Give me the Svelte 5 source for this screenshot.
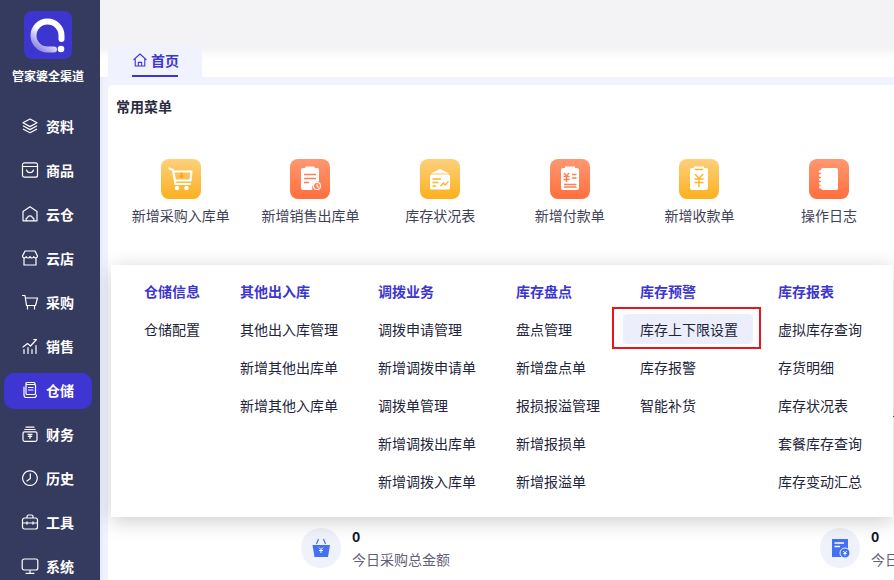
<script lang="ts">
	const navItems = [
		{ label: '资料', d: 'M9 2 16 5.8 9 9.6 2 5.8ZM2.4 9 9 12.6 15.6 9M2.4 12.2 9 15.8 15.6 12.2' },
		{ label: '商品', d: 'M3.5 1.8H14.5A2 2 0 0 1 16.500 3.800V14.200A2 2 0 0 1 14.500 16.200H3.500A2 2 0 0 1 1.500 14.200V3.800A2 2 0 0 1 3.500 1.800ZM1.500 5.500H16.500M5.500 9C6.500 12.500 11.500 12.500 12.500 9' },
		{ label: '云仓', d: 'M2 15.800V6.500L9 1.800 16 6.500V15.800H2M6.500 15.800C4.500 15.800 4.500 12.800 6.500 12.800 7 10.200 11 10.200 11.500 12.800 13.500 12.800 13.500 15.800 11.500 15.800' },
		{ label: '云店', d: 'M4 2H14L16.500 7C16.500 9.500 13 9.500 12.800 7.500 12.500 9.500 9.500 9.500 9 7.500 8.500 9.500 5.500 9.500 5.200 7.500 5 9.500 1.500 9.500 1.500 7ZM3 9.500V16H15V9.500' },
		{ label: '采购', d: 'M1.500 2.500H4L5.500 12.500H14.500L16.500 5H4.500M6.500 12.500V16M13.500 12.500V16' },
		{ label: '销售', d: 'M2 10 6.500 6.500 9.500 9 15.500 2.500M15.500 2.500H12.800M3 12.500V16.500M7 10.500V16.500M11 12.500V16.500M15 8.500V16.500' },
		{ label: '仓储', d: 'M5 3.500V2.500A1 1 0 0 1 6 1.500H13A1 1 0 0 1 14 2.500V3.500M3 6V14A2.500 2.500 0 0 0 5.500 16.500H13A2.500 2.500 0 0 0 15.500 14M5 3.500H13.500A1 1 0 0 1 14.500 4.500V12.500A1 1 0 0 1 13.500 13.500H6A1 1 0 0 1 5 12.500ZM7.500 6.500H12M7.500 9H12' },
		{ label: '财务', d: 'M5 2.200H13M3.800 4.500H14.200M3.500 6.800H14.500A1.500 1.500 0 0 1 16 8.300V14.800A1.500 1.500 0 0 1 14.500 16.300H3.500A1.500 1.500 0 0 1 2 14.800V8.300A1.500 1.500 0 0 1 3.500 6.800ZM7 9.300H11M9 9.300V13.500M7.300 11.300H10.700' },
		{ label: '历史', d: 'M9 1.800A7.300 7.300 0 1 1 8.900 1.800M9.300 4.800V9.500L6 12' },
		{ label: '工具', d: 'M6 5V3.500A1.500 1.500 0 0 1 7.500 2H10.500A1.500 1.500 0 0 1 12 3.500V5M3.500 5H14.500A2 2 0 0 1 16.500 7V14A2 2 0 0 1 14.500 16H3.500A2 2 0 0 1 1.500 14V7A2 2 0 0 1 3.500 5ZM1.500 10H16.500M6 8.800V11.200M12 8.800V11.200' },
		{ label: '系统', d: 'M3.200 2H14.800A2 2 0 0 1 16.800 4V11A2 2 0 0 1 14.800 13H3.200A2 2 0 0 1 1.200 11V4A2 2 0 0 1 3.200 2ZM9 13V16.300M5 16.300H13' }
	];

	const quickItems = [
		{ label: '新增采购入库单', tone: 'gold', glyph: 'cart' },
		{ label: '新增销售出库单', tone: 'coral', glyph: 'clip' },
		{ label: '库存状况表', tone: 'gold', glyph: 'mail' },
		{ label: '新增付款单', tone: 'coral', glyph: 'pay' },
		{ label: '新增收款单', tone: 'gold', glyph: 'receive' },
		{ label: '操作日志', tone: 'coral', glyph: 'book' }
	];

	const menuColumns = [
		{ title: '仓储信息', items: ['仓储配置'] },
		{ title: '其他出入库', items: ['其他出入库管理', '新增其他出库单', '新增其他入库单'] },
		{ title: '调拨业务', items: ['调拨申请管理', '新增调拨申请单', '调拨单管理', '新增调拨出库单', '新增调拨入库单'] },
		{ title: '库存盘点', items: ['盘点管理', '新增盘点单', '报损报溢管理', '新增报损单', '新增报溢单'] },
		{ title: '库存预警', items: ['库存上下限设置', '库存报警', '智能补货'] },
		{ title: '库存报表', items: ['虚拟库存查询', '存货明细', '库存状况表', '套餐库存查询', '库存变动汇总'] }
	];

	const activeNav = '仓储';
	const activeMenu = '库存上下限设置';
</script>

{#snippet glyph(name: string)}
	{#if name === 'cart'}
		<path class="line" d="M8.500 9.500 12 11 14.500 25H29M12.500 12.500H30.500L29.500 21.500H14" />
		<circle class="solid" cx="16" cy="29" r="2.200" />
		<circle class="solid" cx="25.500" cy="29" r="2.200" />
		<path class="ink-fill" d="M19.500 13.500H21.500V16.500H23.500L20.500 19.500 17.500 16.500H19.500Z" />
	{:else if name === 'clip'}
		<path class="solid" d="M13 9H15L16 7.500H24L25 9H27A2 2 0 0 1 29 11V22.500A6.500 6.500 0 0 0 22.500 31H13A2 2 0 0 1 11 29V11A2 2 0 0 1 13 9Z" />
		<path class="ink" d="M14 15.500H26M14 19.500H26M14 23.500H19" />
		<circle class="line thin" cx="27" cy="27" r="3.500" />
		<path class="line thin" d="M27 25.500V27L28.200 28" />
	{:else if name === 'mail'}
		<path class="solid" d="M10.500 14.500 20 10 29.500 14.500Z" />
		<rect class="solid" x="10" y="15.500" width="20" height="15" rx="1.500" />
		<path class="ink" d="M12.500 20H21M12.500 23.500H18.500M12.500 27H16M20.500 27 23.500 24 25 26 28.500 22.500" />
	{:else if name === 'pay'}
		<path class="solid" d="M13 9H15V7.500H25V9H27A2 2 0 0 1 29 11V29A2 2 0 0 1 27 31H13A2 2 0 0 1 11 29V11A2 2 0 0 1 13 9Z" />
		<path class="ink" d="M14 14 16.500 17 19 14M13.500 17.500H19.500M13.500 20.500H19.500M16.500 17V23M22 15.500H26.500M22 19H26.500M14 25.500H26.500M14 28H26.500" />
	{:else if name === 'receive'}
		<path class="solid" d="M13 9H15V7.500H25V9H27A2 2 0 0 1 29 11V29A2 2 0 0 1 27 31H13A2 2 0 0 1 11 29V11A2 2 0 0 1 13 9Z" />
		<path class="ink" d="M16 10.500H24M16 15 20 19.500 24 15M15.500 20H24.500M15.500 23.500H24.500M20 19.500V28" />
	{:else}
		<rect class="solid" x="12" y="9" width="17" height="22" rx="2" />
		<path class="line thin" d="M11 12.500H13.500M11 16.500H13.500M11 20.500H13.500M11 24.500H13.500M11 28H13.500" />
		<circle class="solid" cx="11.500" cy="12.500" r="1.500" />
		<circle class="solid" cx="11.500" cy="16.500" r="1.500" />
		<circle class="solid" cx="11.500" cy="20.500" r="1.500" />
		<circle class="solid" cx="11.500" cy="24.500" r="1.500" />
		<circle class="solid" cx="11.500" cy="28" r="1.500" />
	{/if}
{/snippet}

<div class="app">
	<aside class="sidebar">
		<div class="logo">
			<svg viewBox="0 0 48 48" width="48" height="48">
				<defs>
					<linearGradient id="ring" x1="0.8" y1="0.2" x2="0.2" y2="1">
						<stop offset="0.4" stop-color="#ffffff" />
						<stop offset="1" stop-color="#8f8ae2" />
					</linearGradient>
				</defs>
				<path d="M30 38.500H23.500A14 14 0 1 1 37.500 24.500V28" fill="none" stroke="url(#ring)" stroke-width="6" stroke-linecap="round" />
				<circle cx="37" cy="38" r="3.300" fill="#fff" />
			</svg>
		</div>
		<div class="brand">管家婆全渠道</div>
		<nav class="nav">
			{#each navItems as item}
				<div class="nav-item" class:active={item.label === activeNav}>
					<svg viewBox="0 0 18 18" width="18" height="18"><path d={item.d} /></svg>
					<span>{item.label}</span>
				</div>
			{/each}
		</nav>
	</aside>

	<main class="main">
		<header class="topbar"></header>
		<div class="tabs">
			<div class="tab">
				<svg viewBox="0 0 16 16" width="16" height="16"><path d="M1.500 7.800 8 2l6.500 5.800M3.200 6.500V14h9.600V6.500M6.300 14v-3.600h3.400V14" /></svg>
				<span>首页</span>
			</div>
		</div>
		<section class="card">
			<h2>常用菜单</h2>
			<div class="quick">
				{#each quickItems as item}
					<div class="quick-item">
						<span class="tile {item.tone}">
							<svg viewBox="0 0 40 40" width="40" height="40">{@render glyph(item.glyph)}</svg>
						</span>
						<span class="quick-label">{item.label}</span>
					</div>
				{/each}
			</div>
			<div class="hidden-row">单</div>
			<div class="stats">
				<div class="stat">
					<span class="stat-icon">
						<svg viewBox="0 0 40 40" width="40" height="40">
							<path class="basket" d="M11.500 17H29L27 29H13.500Z" />
							<path class="handle" d="M17.500 11 15.500 16M22.500 11 24.500 16" />
							<path class="mark" d="M18 19.500 20 21.500 22 19.500M18 22.500H22M20 21.500V25" />
						</svg>
					</span>
					<div>
						<b>0</b>
						<p>今日采购总金额</p>
					</div>
				</div>
				<div class="stat">
					<span class="stat-icon">
						<svg viewBox="0 0 40 40" width="40" height="40">
							<path class="basket" d="M12 11H28V29H12Z" />
							<path class="mark wide" d="M14.500 15H24M14.500 18.500H20" />
							<circle class="basket ring" cx="25" cy="25" r="5" />
							<path class="mark" d="M23.300 23 25 25 26.700 23M23.300 25.500H26.700M25 25V27.500" />
						</svg>
					</span>
					<div>
						<b>0</b>
						<p>今日销售总金额</p>
					</div>
				</div>
			</div>
		</section>

		<div class="mega">
			{#each menuColumns as col}
				<div class="mega-col">
					<h3>{col.title}</h3>
					{#each col.items as entry}
						<div class="mega-entry" class:marked={entry === activeMenu}>{entry}</div>
					{/each}
				</div>
			{/each}
		</div>
	</main>
</div>

<style>
	:global(body) {
		margin: 0;
		font-family: 'Noto Sans CJK SC', 'Liberation Sans', sans-serif;
	}

	.app {
		display: flex;
		width: 894px;
		height: 580px;
		overflow: hidden;
		background: #fff;
	}

	.sidebar {
		position: relative;
		z-index: 2;
		flex: 0 0 100px;
		display: flex;
		flex-direction: column;
		align-items: center;
		padding: 11px 4px 0 0;
		box-sizing: border-box;
		background: #353b5f;
		color: #fff;
	}

	.logo {
		width: 48px;
		height: 48px;
		border-radius: 8px;
		background: #3d35d0;
	}

	.logo svg {
		display: block;
	}

	.brand {
		margin-top: 9px;
		font-size: 12px;
		line-height: 16px;
		font-weight: 700;
		white-space: nowrap;
	}

	.nav {
		display: flex;
		flex-direction: column;
		gap: 8px;
		width: 88px;
		margin-top: 25px;
	}

	.nav-item {
		display: flex;
		align-items: center;
		gap: 7px;
		height: 36px;
		padding: 0 0 2px 17px;
		box-sizing: border-box;
		border-radius: 10px;
		font-size: 14px;
		font-weight: 700;
	}

	.nav-item.active {
		background: #3f35d2;
	}

	.nav-item svg {
		flex: none;
		fill: none;
		stroke: #fff;
		stroke-width: 1.200;
		stroke-linejoin: round;
		stroke-linecap: round;
	}

	.main {
		position: relative;
		flex: 1;
		min-width: 0;
		display: flex;
		flex-direction: column;
		background: #f0f2fd;
		box-shadow: inset 6px 0 6px -6px rgba(0, 0, 0, 0.08);
	}

	.topbar {
		flex: 0 0 45px;
		background: #f3f3f5;
	}

	.tabs {
		flex: 0 0 32px;
		padding-left: 8px;
		background: linear-gradient(#f1f1f3, #fff 14px);
	}

	.tab {
		display: flex;
		align-items: center;
		gap: 3px;
		width: 94px;
		height: 32px;
		padding: 0 0 2px 24px;
		box-sizing: border-box;
		border-radius: 8px 8px 0 0;
		background: #f0f2fd;
		color: #3d35d0;
		font-size: 14px;
		font-weight: 700;
		position: relative;
	}

	.tab::after {
		content: '';
		position: absolute;
		left: 24px;
		bottom: 0;
		width: 46px;
		height: 2px;
		background: #3d35d0;
	}

	.tab svg {
		fill: none;
		stroke: #3d35d0;
		stroke-width: 1.100;
		stroke-linejoin: round;
	}

	.card {
		flex: 1;
		margin: 8px 0 0 8px;
		padding: 0 0 0 8px;
		border-radius: 4px 0 0 0;
		background: #fff;
		overflow: hidden;
	}

	h2 {
		margin: 11px 0 0;
		font-size: 14px;
		line-height: 20px;
		font-weight: 700;
		color: #2a2c3e;
	}

	.quick {
		display: grid;
		grid-template-columns: repeat(6, 129.670px);
		margin-top: 43px;
	}

	.quick-item {
		display: flex;
		flex-direction: column;
		align-items: center;
		gap: 6px;
	}

	.tile {
		display: block;
		width: 40px;
		height: 40px;
		border-radius: 8px;
	}

	.tile svg {
		display: block;
	}

	.gold {
		background: linear-gradient(#fdd07c, #fbb01e);
		--ink: #fbb42e;
	}

	.coral {
		background: linear-gradient(#ff9870, #ff6f3e);
		--ink: #ff7f50;
	}

	.solid {
		fill: #fff;
	}

	.line {
		fill: none;
		stroke: #fff;
		stroke-width: 2.200;
		stroke-linejoin: round;
		stroke-linecap: round;
	}

	.line.thin {
		stroke-width: 1.200;
	}

	.ink {
		fill: none;
		stroke: var(--ink);
		stroke-width: 1.400;
	}

	.ink-fill {
		fill: #f5a623;
	}

	.quick-label {
		font-size: 14px;
		line-height: 20px;
		color: #3f4257;
		white-space: nowrap;
	}

	.hidden-row {
		margin: 177px 0 0 776px;
		font-size: 14px;
		line-height: 20px;
		color: #3f4257;
		white-space: nowrap;
	}

	.stats {
		display: flex;
		gap: 479px;
		margin: 105px 0 0 185px;
	}

	.stat {
		display: flex;
		align-items: center;
		gap: 11px;
		flex: none;
		width: 40px;
	}

	.stat > div {
		flex: none;
	}

	.stat-icon {
		flex: none;
		width: 40px;
		height: 40px;
		border-radius: 50%;
		background: #eff2fb;
	}

	.stat-icon svg {
		display: block;
	}

	.basket {
		fill: #4470f5;
	}

	.basket.ring {
		stroke: #eff2fb;
		stroke-width: 1;
	}

	.handle {
		fill: none;
		stroke: #4470f5;
		stroke-width: 1.200;
	}

	.mark {
		fill: none;
		stroke: #fff;
		stroke-width: 1;
	}

	.mark.wide {
		stroke-width: 1.400;
	}

	.stat b {
		display: block;
		font-size: 14px;
		line-height: 18px;
		color: #15172a;
	}

	.stat p {
		margin: 4px 0 0;
		font-size: 14px;
		line-height: 20px;
		color: #5f6178;
		white-space: nowrap;
	}

	.mega {
		position: absolute;
		left: 11px;
		top: 265px;
		width: 782px;
		height: 252px;
		box-sizing: border-box;
		display: flex;
		gap: 8px;
		padding: 16px 0 0 17px;
		background: #fff;
		box-shadow: 0 4px 20px rgba(0, 0, 0, 0.2);
	}

	.mega-col {
		display: flex;
		flex-direction: column;
		gap: 8px;
	}

	h3 {
		margin: 0;
		height: 25px;
		padding-left: 16px;
		font-size: 14px;
		line-height: 20px;
		font-weight: 700;
		color: #3d35d0;
	}

	.mega-entry {
		height: 30px;
		padding: 0 16px;
		border-radius: 4px;
		font-size: 14px;
		line-height: 30px;
		color: #22243a;
		white-space: nowrap;
	}

	.mega-entry.marked {
		position: relative;
		margin: 0 1px 0 -1px;
		padding: 0 15px 0 17px;
		background: #eceefc;
	}

	.mega-entry.marked::after {
		content: '';
		position: absolute;
		inset: -7px -8px -5px -11px;
		border: 2px solid #e8141e;
	}
</style>
